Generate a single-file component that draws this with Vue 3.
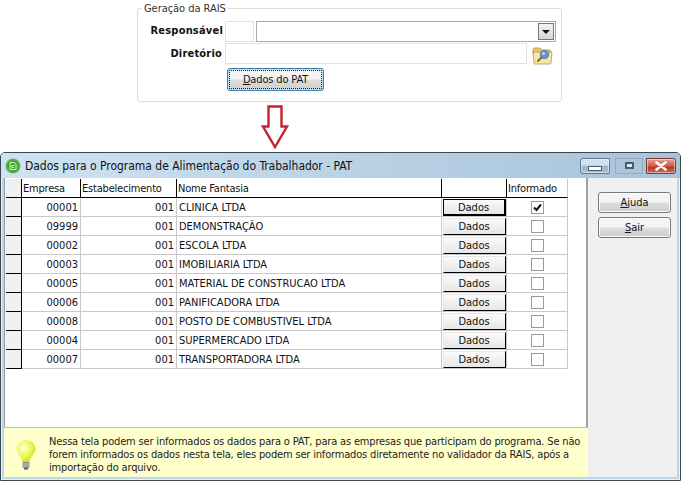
<script setup>
const rows = [
  ['00001', '001', 'CLINICA LTDA', true],
  ['09999', '001', 'DEMONSTRAÇÃO', false],
  ['00002', '001', 'ESCOLA LTDA', false],
  ['00003', '001', 'IMOBILIARIA LTDA', false],
  ['00005', '001', 'MATERIAL DE CONSTRUCAO LTDA', false],
  ['00006', '001', 'PANIFICADORA LTDA', false],
  ['00008', '001', 'POSTO DE COMBUSTIVEL LTDA', false],
  ['00004', '001', 'SUPERMERCADO LTDA', false],
  ['00007', '001', 'TRANSPORTADORA LTDA', false],
]
</script>

<template>
  <div class="page">
    <fieldset class="group">
      <legend>Geração da RAIS</legend>
      <div class="form-row first">
        <span class="label resp">Responsável</span>
        <span class="input small"></span>
        <span class="combo"><span class="drop"><i></i></span></span>
      </div>
      <div class="form-row second">
        <span class="label dir">Diretório</span>
        <span class="input wide"></span>
        <svg class="folder" width="21" height="20" viewBox="0 0 21 20">
          <path d="M1 5 L2 3 H8 L10 5 H18 L19 7 V9 H1 Z" fill="#e8c868" stroke="#b09048" stroke-width=".8"/>
          <path d="M1 7 H20 L19 18 Q19 19 18 19 H3 Q2 19 2 18 Z" fill="#f6e6a2" stroke="#b49a50" stroke-width=".8"/>
          <circle cx="12.5" cy="9.5" r="4.2" fill="#5f93d8" stroke="#6b7ea0" stroke-width="1"/>
          <circle cx="11.5" cy="8.5" r="1.6" fill="#b9d6f6"/>
          <path d="M9.5 12.5 L6 16" stroke="#7a6a50" stroke-width="2" stroke-linecap="round"/>
        </svg>
      </div>
      <button class="pat"><span class="dots"><u>D</u>ados do PAT</span></button>
    </fieldset>

    <svg class="arrow" width="28" height="44" viewBox="0 0 28 44">
      <path d="M7.5 1.5 H20.5 V21.5 H26 L14 42 L2 21.5 H7.5 Z" fill="#fff" stroke="#c5232f" stroke-width="2.4"/>
    </svg>

    <div class="win">
      <div class="title">
        <svg class="app" width="16" height="16" viewBox="0 0 16 16">
          <circle cx="8" cy="8" r="7.5" fill="#5cb848"/>
          <circle cx="8" cy="8" r="6" fill="#44a63a"/>
          <path d="M5 4.5 H9.5 L11 6 V11.5 H5 Z" fill="none" stroke="#d8f0c8" stroke-width="1"/>
          <path d="M9.5 7.5 H6.8 V9.5 H9" fill="none" stroke="#d8f0c8" stroke-width="1"/>
        </svg>
        <span class="title-text">Dados para o Programa de Alimentação do Trabalhador - PAT</span>
        <span class="ctrls">
          <span class="ctrl min"><i></i></span>
          <span class="ctrl max"><i></i></span>
          <span class="ctrl close">
            <svg width="14" height="10" viewBox="0 0 14 10"><path d="M2.5 1.5 L11.5 8.5 M11.5 1.5 L2.5 8.5" stroke="#fff" stroke-width="2.6" stroke-linecap="round"/></svg>
          </span>
        </span>
      </div>
      <div class="client">
        <div class="left">
          <div class="grid">
            <div class="row head">
              <div class="ind"></div>
              <div class="cell">Empresa</div>
              <div class="cell">Estabelecimento</div>
              <div class="cell">Nome Fantasia</div>
              <div class="cell"></div>
              <div class="cell">Informado</div>
            </div>
            <div v-for="(r, i) in rows" :key="r[0]" class="row">
              <div class="ind"></div>
              <div class="cell num">{{ r[0] }}</div>
              <div class="cell num">{{ r[1] }}</div>
              <div class="cell">{{ r[2] }}</div>
              <div class="cell btn-cell"><span class="dados" :class="{ on: i === 0 }">Dados</span></div>
              <div class="cell chk-cell">
                <span class="chk">
                  <svg v-if="r[3]" width="11" height="11" viewBox="0 0 11 11"><path d="M2 5.5 L4.5 8 L9 2.5" fill="none" stroke="#111" stroke-width="2"/></svg>
                </span>
              </div>
            </div>
          </div>
          <div class="hint">
            <svg class="bulb" width="22" height="31" viewBox="0 0 22 31">
              <defs>
                <radialGradient id="bulbFill" cx=".38" cy=".35" r=".7">
                  <stop offset="0" stop-color="#fdffd8"/>
                  <stop offset=".55" stop-color="#eef85a"/>
                  <stop offset="1" stop-color="#c2dc22"/>
                </radialGradient>
              </defs>
              <path d="M11 1 C16.5 1 20.5 5 20.5 10 C20.5 15 15 17.5 14.5 23 H7.5 C7 17.5 1.5 15 1.5 10 C1.5 5 5.5 1 11 1 Z" fill="url(#bulbFill)"/>
              <rect x="7.5" y="23" width="7" height="6" rx="1" fill="#8a8f80"/>
              <path d="M7.5 25 H14.5 M7.5 27 H14.5" stroke="#d5d8c8" stroke-width=".8"/>
              <rect x="9" y="29" width="4" height="1.6" fill="#5e6058"/>
            </svg>
            <p>Nessa tela podem ser informados os dados para o PAT, para as empresas que participam do programa. Se não forem informados os dados nesta tela, eles podem ser informados diretamente no validador da RAIS, após a importação do arquivo.</p>
          </div>
        </div>
        <div class="side">
          <button class="sbtn"><u>A</u>juda</button>
          <button class="sbtn"><u>S</u>air</button>
        </div>
      </div>
    </div>
  </div>
</template>

<style>
html, body { margin: 0; background: #fff; }
</style>

<style scoped>
.page {
  width: 682px;
  height: 482px;
  overflow: hidden;
  background: #fff;
  font-family: "DejaVu Sans Condensed", "DejaVu Sans", sans-serif;
  font-stretch: condensed;
  font-size: 11px;
  color: #111;
  display: flex;
  flex-direction: column;
  align-items: flex-start;
}
.group {
  box-sizing: border-box;
  width: 425px;
  height: 100px;
  margin: 2px 0 0 137px;
  padding: 0;
  border: 1px solid #dcdcdc;
  border-radius: 3px;
  position: relative;
}
legend {
  margin-left: 4px;
  padding: 0 2px;
  line-height: 13px;
  color: #333;
  letter-spacing: -0.05px;
}
.form-row { display: flex; align-items: flex-start; }
.form-row.first { margin-top: 6px; height: 22px; }
.form-row.second { height: 25px; }
.label {
  text-align: right;
  font-weight: 700;
  line-height: 20px;
  letter-spacing: 0.2px;
}
.label.resp { width: 85px; }
.label.dir { width: 84px; line-height: 21px; }
.input {
  box-sizing: border-box;
  display: block;
  height: 21px;
  border: 1px solid #dfe3e6;
  background: #fff;
}
.small { width: 29px; margin-left: 2px; }
.wide { width: 302px; margin-left: 3px; }
.combo {
  box-sizing: border-box;
  width: 300px;
  height: 21px;
  margin-left: 2px;
  border: 1px solid #a8a8a8;
  display: flex;
  justify-content: flex-end;
  padding: 1px;
}
.drop {
  box-sizing: border-box;
  width: 16px;
  height: 17px;
  border: 1px solid #777;
  background: linear-gradient(#f2f2f2, #d4d4d4);
  display: flex;
  align-items: center;
  justify-content: center;
}
.drop i {
  border-left: 4px solid transparent;
  border-right: 4px solid transparent;
  border-top: 4px solid #111;
}
.folder { margin: 2px 0 0 5px; }
.pat {
  box-sizing: border-box;
  display: block;
  width: 97px;
  height: 23px;
  margin: 0 0 0 89px;
  padding: 1px;
  border: 1px solid #3c7fb1;
  border-radius: 3px;
  background: linear-gradient(#f4f4f4 0 45%, #dcdcdc 55%, #cfcfcf);
  font: inherit;
  color: #111;
  box-shadow: inset 0 0 0 1px #a5e0f5;
}
.dots {
  display: block;
  line-height: 17px;
  border: 1px dotted #222;
  letter-spacing: -0.15px;
}
.arrow { display: block; margin: 3px 0 0 261px; }
.win {
  box-sizing: border-box;
  width: 681px;
  height: 329px;
  margin-top: 3px;
  border: 1px solid #3b4650;
  border-radius: 5px 5px 0 0;
  background: #bcd6ea;
  display: flex;
  flex-direction: column;
  box-shadow: inset 0 0 0 1px #e8f2f8;
}
.title {
  height: 25px;
  flex: none;
  display: flex;
  align-items: center;
  padding: 0 4px 0 4px;
  background: linear-gradient(90deg, #cfe3f2, #b6cfe3 60%, #a8c3da);
  border-radius: 4px 4px 0 0;
}
.app { margin-right: 4px; }
.title-text { font-size: 12px; color: #111; letter-spacing: -0.03px; }
.ctrls { margin-left: auto; display: flex; gap: 3px; }
.ctrl {
  box-sizing: border-box;
  height: 16px;
  border: 1px solid #62788e;
  display: flex;
  align-items: center;
  justify-content: center;
  background: linear-gradient(#d0e0ee 0 45%, #9db5cb 50%, #a9c2d8);
  box-shadow: inset 0 0 0 1px rgba(255,255,255,.45);
}
.min { width: 30px; border-radius: 3px 0 0 3px; }
.min i { width: 12px; height: 3px; border: 1px solid #4d5b6a; background: #fff; margin-top: 5px; }
.max { width: 28px; margin-left: 2px; background: none; border-color: #92abc1; box-shadow: none; }
.max i { width: 5px; height: 3px; border: 2px solid #4d5b6a; background: #dfe9f2; }
.close {
  width: 30px;
  border-radius: 0 3px 3px 0;
  border-color: #7a3a32;
  background: linear-gradient(#e8a596, #cf5a48 50%, #b53a2a 60%, #c8705c);
}
.client {
  flex: 1;
  display: flex;
  margin: 0 3px 3px 3px;
  min-height: 0;
}
.left {
  box-sizing: border-box;
  width: 584px;
  display: flex;
  flex-direction: column;
  background: #fff;
  border-left: 1px solid #8f9aa2;
  border-right: 2px solid #a2a2a2;
}
.grid { flex: 1; padding: 1px 0 0 1px; }
.row {
  display: grid;
  grid-template-columns: 16px 59px 96px 265px 65px 61px;
  height: 19px;
}
.ind {
  box-sizing: border-box;
  background: #f0f0f0;
  border-right: 1px solid #000;
  border-bottom: 1px solid #000;
}
.cell {
  box-sizing: border-box;
  border-right: 1px solid #c8c8c8;
  border-bottom: 1px solid #c8c8c8;
  padding: 1px 2px 0;
  line-height: 18px;
  white-space: nowrap;
  overflow: hidden;
}
.head .cell {
  border-bottom-color: #000;
  border-right-color: #000;
  padding-left: 1px;
  letter-spacing: -0.2px;
}
.head .cell:last-child { border-right-color: #c8c8c8; }
.num { text-align: right; }
.btn-cell, .chk-cell {
  display: flex;
  align-items: center;
  justify-content: center;
  padding: 0;
}
.dados {
  box-sizing: border-box;
  display: block;
  width: 63px;
  height: 17px;
  line-height: 16px;
  text-align: center;
  background: linear-gradient(#fafafa, #e6e6e6);
  border-right: 1px solid #000;
  border-bottom: 1px solid #000;
  border-top: 1px solid #e8e8e8;
  border-left: 1px solid #e8e8e8;
}
.dados.on { border: 1px solid #000; border-right-width: 2px; border-bottom-width: 2px; }
.chk {
  box-sizing: border-box;
  width: 13px;
  height: 13px;
  border: 1px solid #9a9a9a;
  background: #fdfdfd;
  display: flex;
  align-items: center;
  justify-content: center;
}
.hint {
  box-sizing: border-box;
  height: 50px;
  margin-right: -2px;
  margin-left: -1px;
  flex: none;
  display: flex;
  background: #ffffcc;
  border-top: 1px solid #bdbdbd;
}
.bulb { flex: none; margin: 11px 0 0 11px; }
.hint p {
  margin: 7px 0 0 12px;
  width: 536px;
  line-height: 13px;
  color: #222;
  letter-spacing: -0.17px;
}
.side {
  flex: 1;
  background: #f0f0f0;
  padding: 14px 6px 0 10px;
  display: flex;
  flex-direction: column;
  gap: 4px;
}
.sbtn {
  box-sizing: border-box;
  width: 73px;
  height: 21px;
  padding: 0;
  border: 1px solid #7a7a7a;
  border-radius: 3px;
  background: linear-gradient(#f4f4f4 0 45%, #dedede 55%, #cdcdcd);
  box-shadow: inset 0 0 0 1px #fbfbfb;
  font: inherit;
  color: #111;
}
</style>
